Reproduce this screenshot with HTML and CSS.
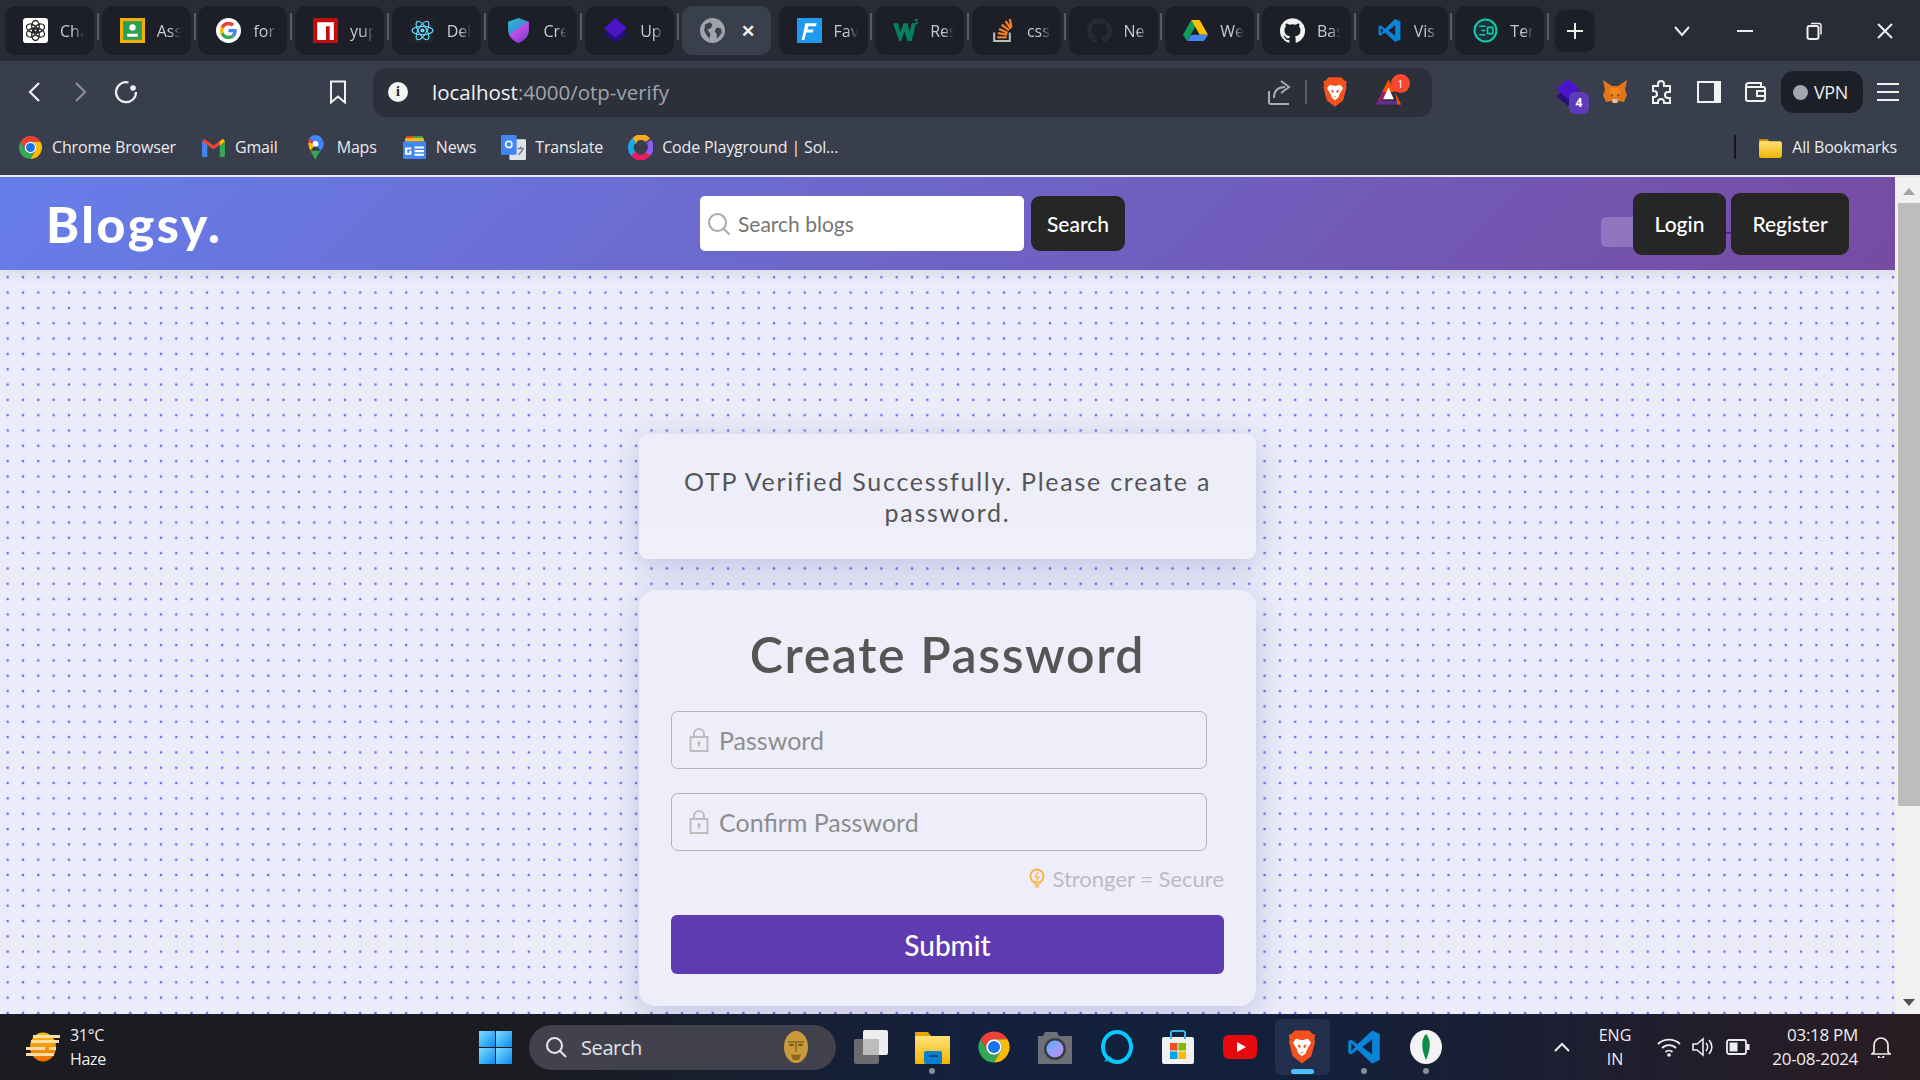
FILE: index.html
```html
<!DOCTYPE html>
<html lang="en">
<head>
<meta charset="utf-8">
<title>Blogsy</title>
<link rel="stylesheet" href="styles.css">
</head>
<body>
<svg class="sprite" aria-hidden="true">
  <defs>
    <linearGradient id="shieldG" x1="0" y1="0" x2="0.6" y2="1"><stop offset="0" stop-color="#1fc8c0"/><stop offset=".5" stop-color="#3f8fe0"/><stop offset=".55" stop-color="#c04fe0"/><stop offset="1" stop-color="#8b3fd8"/></linearGradient>
    <linearGradient id="sunG" x1="0" y1="0" x2="0" y2="1"><stop offset="0" stop-color="#ffc400"/><stop offset="1" stop-color="#f26a00"/></linearGradient>
    <linearGradient id="winG" x1="0" y1="0" x2="1" y2="1"><stop offset="0" stop-color="#7fdcff"/><stop offset="1" stop-color="#0a8cf0"/></linearGradient>
    <linearGradient id="fldG" x1="0" y1="0" x2="0" y2="1"><stop offset="0" stop-color="#ffe27a"/><stop offset="1" stop-color="#f2b500"/></linearGradient>
    <linearGradient id="camG" x1="0" y1="0" x2="1" y2="1"><stop offset="0" stop-color="#5ab0ff"/><stop offset="1" stop-color="#c98cf0"/></linearGradient>
  </defs>
  <symbol id="chrome" viewBox="0 0 24 24">
    <path fill="#EA4335" d="M2.47 6.5A11 11 0 0 1 21.53 6.5H12A5.5 5.5 0 0 0 7.24 14.75Z"/>
    <path fill="#34A853" d="M2.47 6.5A11 11 0 0 0 12 23L16.76 14.75A5.5 5.5 0 0 1 7.24 14.75Z"/>
    <path fill="#FBBC05" d="M21.53 6.5A11 11 0 0 1 12 23L16.76 14.75A5.5 5.5 0 0 0 12 6.5Z"/>
    <circle cx="12" cy="12" r="5.5" fill="#fff"/><circle cx="12" cy="12" r="4.3" fill="#1a73e8"/>
  </symbol>
  <symbol id="google" viewBox="0 0 48 48">
    <path fill="#EA4335" d="M24 9.5c3.54 0 6.71 1.22 9.21 3.6l6.85-6.85C35.9 2.38 30.47 0 24 0 14.62 0 6.51 5.38 2.56 13.22l7.98 6.19C12.43 13.72 17.74 9.5 24 9.5z"/>
    <path fill="#4285F4" d="M46.98 24.55c0-1.57-.15-3.09-.38-4.55H24v9.02h12.94c-.58 2.96-2.26 5.48-4.78 7.18l7.73 6c4.51-4.18 7.09-10.36 7.09-17.65z"/>
    <path fill="#FBBC05" d="M10.53 28.59c-.48-1.45-.76-2.99-.76-4.59s.27-3.14.76-4.59l-7.98-6.19C.92 16.46 0 20.12 0 24c0 3.88.92 7.54 2.56 10.78l7.97-6.19z"/>
    <path fill="#34A853" d="M24 48c6.48 0 11.93-2.13 15.89-5.81l-7.73-6c-2.15 1.45-4.92 2.3-8.16 2.3-6.26 0-11.57-4.22-13.47-9.91l-7.98 6.19C6.51 42.62 14.62 48 24 48z"/>
  </symbol>
  <symbol id="brave" viewBox="0 0 24 24">
    <path fill="#f4511e" d="M7.2 1h9.6l2.2 2.4 1.8.5-.6 3.2.5 1.4-2.5 9.7L12 23l-6.2-4.8-2.5-9.7.5-1.4-.6-3.2 1.8-.5z"/>
    <path fill="#fff" d="M8 6.5l4 1 4-1 2 2.6-2.6 4.4-.9 2.6-2.5 2-2.5-2-.9-2.6L6 9.1z"/>
    <path fill="#f4511e" d="M9 10.2l2 .8v1.2l-1 .6zM15 10.2l-2 .8v1.2l1 .6zM10.8 15l1.2.5 1.2-.5-1.2 1.4z"/>
  </symbol>
  <symbol id="vscode" viewBox="0 0 24 24">
    <path fill-rule="evenodd" fill="#0a84d8" d="M17.4 1 22.5 3.4v17.2L17.4 23 7.6 13.8 3.4 17 1.5 16V8l1.9-1L7.6 10.2zM17.4 7 11 12l6.4 5zM3.6 9.4v5.2L6.2 12z"/>
  </symbol>
  <symbol id="github" viewBox="0 0 24 24">
    <path d="M12 .3a12 12 0 0 0-3.8 23.4c.6.1.8-.3.8-.6v-2c-3.3.7-4-1.6-4-1.6-.6-1.4-1.4-1.8-1.4-1.8-1-.7.1-.7.1-.7 1.2.1 1.8 1.2 1.8 1.2 1 1.8 2.8 1.3 3.5 1 .1-.8.4-1.3.8-1.6-2.7-.3-5.5-1.3-5.5-6 0-1.2.5-2.3 1.3-3.1-.2-.4-.6-1.6 0-3.2 0 0 1-.3 3.4 1.2a11.5 11.5 0 0 1 6 0c2.3-1.5 3.3-1.2 3.3-1.2.6 1.6.2 2.8 0 3.2.9.8 1.3 1.9 1.3 3.2 0 4.6-2.8 5.6-5.5 5.9.5.4.9 1 .9 2.2v3.3c0 .3.1.7.8.6A12 12 0 0 0 12 .3"/>
  </symbol>
  <symbol id="lock" viewBox="0 0 20 24">
    <g fill="none" stroke="#bdbdbd" stroke-width="2"><rect x="1.5" y="9" width="17" height="14"/><path d="M5 9V6a5 5 0 0 1 10 0v3"/></g>
    <circle cx="10" cy="15" r="1.8" fill="#bdbdbd"/><rect x="9.2" y="15" width="1.6" height="4" fill="#bdbdbd"/>
  </symbol>
</svg>

<div class="tabstrip">
  <div class="tab"><svg class="tab-ic" viewBox="0 0 24 24"><rect width="24" height="24" rx="3" fill="#fff"/><g fill="none" stroke="#222" stroke-width="1.3"><ellipse cx="12" cy="8" rx="3.6" ry="5.6"/><ellipse cx="12" cy="8" rx="3.6" ry="5.6" transform="rotate(60 12 12)"/><ellipse cx="12" cy="8" rx="3.6" ry="5.6" transform="rotate(120 12 12)"/><ellipse cx="12" cy="8" rx="3.6" ry="5.6" transform="rotate(180 12 12)"/><ellipse cx="12" cy="8" rx="3.6" ry="5.6" transform="rotate(240 12 12)"/><ellipse cx="12" cy="8" rx="3.6" ry="5.6" transform="rotate(300 12 12)"/></g></svg><span class="tab-t">Cha</span></div><i class="sep"></i>
  <div class="tab"><svg class="tab-ic" viewBox="0 0 24 24"><rect width="24" height="24" fill="#f2b100"/><rect x="3" y="3" width="18" height="18" fill="#2f9e55"/><circle cx="12" cy="9" r="3" fill="#fff"/><path fill="#fff" d="M7 15h10v3H7z"/></svg><span class="tab-t">Ass</span></div><i class="sep"></i>
  <div class="tab"><svg class="tab-ic" viewBox="0 0 26 26"><circle cx="13" cy="13" r="13" fill="#fff"/><use href="#google" x="4" y="4" width="18" height="18"/></svg><span class="tab-t">for</span></div><i class="sep"></i>
  <div class="tab"><svg class="tab-ic" viewBox="0 0 24 24"><rect width="24" height="24" fill="#c40c0c"/><path fill="#fff" d="M4 4h16v17h-4V8h-3.5v13H4z"/></svg><span class="tab-t">yup</span></div><i class="sep"></i>
  <div class="tab"><svg class="tab-ic" viewBox="0 0 24 24"><rect width="24" height="24" fill="#20232a"/><g fill="none" stroke="#61dafb" stroke-width="1.1"><ellipse cx="12" cy="12" rx="10" ry="4"/><ellipse cx="12" cy="12" rx="10" ry="4" transform="rotate(60 12 12)"/><ellipse cx="12" cy="12" rx="10" ry="4" transform="rotate(120 12 12)"/></g><circle cx="12" cy="12" r="2" fill="#61dafb"/></svg><span class="tab-t">Del</span></div><i class="sep"></i>
  <div class="tab"><svg class="tab-ic" viewBox="0 0 24 24"><path fill="url(#shieldG)" d="M12 0l10 3.5v8C22 18 17 22 12 24 7 22 2 18 2 11.5v-8z"/></svg><span class="tab-t">Cre</span></div><i class="sep"></i>
  <div class="tab"><svg class="tab-ic" viewBox="0 0 24 24"><path fill="#2a0e80" d="M12 7l11 8-11 9L1 15z"/><path fill="#4a14c8" d="M12 0l11 10-11 9L1 10z"/></svg><span class="tab-t">Up</span></div><i class="sep"></i>
  <div class="tab tab-active"><svg class="tab-ic" viewBox="0 0 24 24"><circle cx="12" cy="12" r="12" fill="#9fa3ac"/><path fill="#3a3f4c" d="M5 6l5-2 2 3-2 3-3 1 3 4-1 5-3-4-2-4zM16 9l4 1 1 4-3 4-2 2v-5l-2-2z"/></svg><span class="tab-x">✕</span></div><i class="sep sep-off"></i>
  <div class="tab"><svg class="tab-ic" viewBox="0 0 24 24"><rect width="24" height="24" fill="#1e9bf0"/><path fill="#fff" d="M8 5h11l-1 3h-7l-1 3h6l-1 3h-6l-2 7H4.500z"/></svg><span class="tab-t">Fav</span></div><i class="sep"></i>
  <div class="tab"><svg class="tab-ic" viewBox="0 0 24 24"><path fill="#04825f" d="M0 5h5l2 9 3-9h4l2 9 2-9h4l-4 17h-4l-3-9-3 9H6z"/><path fill="#04825f" d="M21 1h3v1l-1 1 1 1v2h-3V5h2l-1-1 1-1h-2z"/></svg><span class="tab-t">Res</span></div><i class="sep"></i>
  <div class="tab"><svg class="tab-ic" viewBox="0 0 24 24"><path fill="none" stroke="#bcbbbb" stroke-width="2" d="M4 14v8h15v-8"/><g fill="none" stroke="#f48024" stroke-width="2.200"><path d="M7 18.500h9M7.500 14.500l9 1.500M8.700 10.500l8.200 3.600M11.200 6.500l7 5.200M15 3l5 7.300M19 1l1.600 8"/></g></svg><span class="tab-t">css</span></div><i class="sep"></i>
  <div class="tab"><svg class="tab-ic icon-ghdark"><use href="#github"/></svg><span class="tab-t">Ne</span></div><i class="sep"></i>
  <div class="tab"><svg class="tab-ic" viewBox="0 0 24 24"><path fill="#0f9d58" d="M8 2 0 16l4 6 8-14z"/><path fill="#ffc107" d="M8 2h8l8 14h-8z"/><path fill="#4285f4" d="M4 22h16l4-6H8z"/></svg><span class="tab-t">We</span></div><i class="sep"></i>
  <div class="tab"><svg class="tab-ic icon-ghwhite"><use href="#github"/></svg><span class="tab-t">Bas</span></div><i class="sep"></i>
  <div class="tab"><svg class="tab-ic"><use href="#vscode"/></svg><span class="tab-t">Vis</span></div><i class="sep"></i>
  <div class="tab"><svg class="tab-ic" viewBox="0 0 24 24"><circle cx="12" cy="12" r="10.500" fill="#17323a" stroke="#16c8a8" stroke-width="2"/><g stroke="#16c8a8" stroke-width="1.500" fill="none"><path d="M6 8h6M8 12h4M6 16h6"/><path d="M14 9h5v6h-5z"/></g></svg><span class="tab-t">Ter</span></div><i class="sep"></i>
  <div class="tab-plus"><svg width="20" height="20" viewBox="0 0 20 20"><path stroke="#eee" stroke-width="2" d="M10 2v16M2 10h16"/></svg></div>
  <div class="win">
    <svg class="win-a" width="18" height="12" viewBox="0 0 18 12"><path d="M2 2l7 8 7-8" fill="none" stroke="#eee" stroke-width="2"/></svg>
    <svg class="win-b" width="18" height="4" viewBox="0 0 18 4"><path d="M1 2h16" stroke="#eee" stroke-width="2"/></svg>
    <svg class="win-c" width="16" height="18" viewBox="0 0 16 18"><rect x="1.500" y="4" width="11" height="13" rx="2" fill="none" stroke="#eee" stroke-width="2"/><path d="M5 1.500h8a2 2 0 0 1 2 2v9" fill="none" stroke="#eee" stroke-width="1.500"/></svg>
    <svg class="win-d" width="18" height="18" viewBox="0 0 18 18"><path d="M2 2l14 14M16 2L2 16" stroke="#eee" stroke-width="2"/></svg>
  </div>
</div>

<div class="toolbar">
  <svg class="nav-back" width="16" height="24" viewBox="0 0 16 24"><path d="M13 3L4 12l9 9" fill="none" stroke="#f0f0f0" stroke-width="2.200"/></svg>
  <svg class="nav-fwd" width="16" height="24" viewBox="0 0 16 24"><path d="M3 3l9 9-9 9" fill="none" stroke="#8a8e98" stroke-width="2.200"/></svg>
  <svg class="nav-rel" width="26" height="26" viewBox="0 0 26 26"><path d="M15.500 3.500A10 10 0 1 0 23 13" fill="none" stroke="#f0f0f0" stroke-width="2.200"/><circle cx="20" cy="9" r="2.800" fill="#f0f0f0"/></svg>
  <svg class="nav-mark" width="18" height="24" viewBox="0 0 18 24"><path d="M2 1.500h14v21l-7-6-7 6z" fill="none" stroke="#f0f0f0" stroke-width="2"/></svg>
  <div class="urlbar">
    <span class="info">i</span>
    <span class="url"><b>localhost</b>:4000/otp-verify</span>
    <svg class="url-share" width="26" height="28" viewBox="0 0 26 28"><path d="M2 13v11a2 2 0 0 0 2 2h18" fill="none" stroke="#a8abb2" stroke-width="2"/><path d="M7 20c0-7 4-11 11-11M14 3l8 6-8 6" fill="none" stroke="#a8abb2" stroke-width="2"/></svg>
    <i class="url-sep"></i>
    <svg class="url-brave"><use href="#brave"/></svg>
    <div class="bat">
      <svg width="27" height="26" viewBox="0 0 30 28"><path fill="#ff5000" d="M15 0l7 14H8z"/><path fill="#9e1f63" d="M8 14l7 0-11 14H1z"/><path fill="#662d91" d="M4 24h22l3 4H1z"/><path fill="#ff5000" d="M22 14l7 14h-4z"/><path fill="#fff" d="M15 9l6 13H9z"/></svg>
      <span class="bat-badge">1</span>
    </div>
  </div>
  <div class="exts">
    <div class="ext-purple">
      <svg width="24" height="30" viewBox="0 0 24 30"><path fill="#2a0e80" d="M12 10l12 9-12 10L0 19z"/><path fill="#4a14c8" d="M12 2l12 10-12 10L0 12z"/></svg>
      <span class="ext-badge">4</span>
    </div>
    <svg class="ext-fox" width="26" height="26" viewBox="0 0 26 26"><path fill="#e2761b" d="M1 1l9 6h6l9-6-2 10 2 5-3 7-5-1-2 2h-4l-2-2-5 1-3-7 2-5z"/><path fill="#f6851b" d="M7 12l3-3h6l3 3-3 6h-6z"/><path fill="#233447" d="M9 15l2 1-1 2zM17 15l-2 1 1 2z"/><path fill="#d7c1b3" d="M10 20h6l-1 4h-4z"/></svg>
    <svg class="ext-puz" width="24" height="26" viewBox="0 0 24 26"><path fill="none" stroke="#f2f2f2" stroke-width="2" d="M3 7h5V5a3 3 0 0 1 6 0v2h6v6h-2a3 3 0 0 0 0 6h2v5h-6v-1a3 3 0 0 0-6 0v1H3v-6h1a3 3 0 0 0 0-6H3z"/></svg>
    <svg class="ext-side" width="24" height="22" viewBox="0 0 24 22"><rect x="1" y="1" width="22" height="20" fill="none" stroke="#f2f2f2" stroke-width="2"/><rect x="1" y="1" width="6" height="20" fill="#f2f2f2"/></svg>
    <svg class="ext-wal" width="24" height="22" viewBox="0 0 24 22"><path fill="none" stroke="#f2f2f2" stroke-width="2" d="M3 5a3 3 0 0 1 3-3h12v4M3 5v13a2 2 0 0 0 2 2h15a2 2 0 0 0 2-2V8a2 2 0 0 0-2-2H4"/><rect x="14" y="10" width="8" height="5" fill="none" stroke="#f2f2f2" stroke-width="2"/></svg>
    <div class="vpn"><i class="vpn-dot"></i>VPN</div>
    <div class="burger"><i></i><i></i><i></i></div>
  </div>
</div>

<div class="bookmarks">
  <span class="bm bm-chrome"><svg class="bm-ic"><use href="#chrome"/></svg>Chrome Browser</span>
  <span class="bm"><svg class="bm-ic" viewBox="0 0 24 24"><path fill="#4285f4" d="M1 6h5v15H2a1 1 0 0 1-1-1z"/><path fill="#34a853" d="M18 6h5v14a1 1 0 0 1-1 1h-4z"/><path fill="#ea4335" d="M1 6l2-2.500L12 10l9-6.500L23 6l-11 8z"/><path fill="#fbbc04" d="M18 6l3-2.500L23 6l-5 4z"/></svg>Gmail</span>
  <span class="bm"><svg class="bm-ic" viewBox="0 0 24 24"><path fill="#34a853" d="M7 15l5 9c1-4 3-6 5-9z"/><path fill="#fbbc04" d="M5 7c0 3 1 5 2 8l5-6z"/><path fill="#ea4335" d="M6 3a8 8 0 0 0-1 4l7 2z"/><path fill="#4285f4" d="M12 0a8 8 0 0 0-6 3l6 6 7-4a8 8 0 0 0-7-5z"/><path fill="#4285f4" d="M19 5a8 8 0 0 1-2 10l-5-6z"/><circle cx="12" cy="8.500" r="2.800" fill="#fff"/></svg>Maps</span>
  <span class="bm"><svg class="bm-ic" viewBox="0 0 24 24"><path fill="#ea4335" d="M4 1l9 0 0 6H4z"/><path fill="#34a853" d="M11 1l9 0v6h-9z"/><path fill="#fbbc04" d="M3 3h18v6H3z"/><rect x="1" y="6" width="22" height="17" rx="1" fill="#4285f4"/><g fill="#fff"><path d="M3 12h6v2H3zM3 12h2v7H3zM3 17h6v2H3zM7 15h2v3H7z"/><path d="M12 11h9v2h-9zM12 14.500h9v2h-9zM12 18h9v2h-9z"/></g></svg>News</span>
  <span class="bm"><svg class="bm-ic" viewBox="0 0 24 24"><rect x="8" y="4" width="16" height="20" rx="1" fill="#dfe3e8"/><rect x="0" y="0" width="15" height="19" rx="1" fill="#4285f4"/><circle cx="7.500" cy="9" r="3" fill="none" stroke="#fff" stroke-width="1.500"/><path d="M16 13h6M19 11v2M17 19l4-5" stroke="#777" stroke-width="1.300" fill="none"/></svg>Translate</span>
  <span class="bm"><svg class="bm-ic" viewBox="0 0 24 24"><g fill="none" stroke-width="5.500"><path stroke="#f7a81b" d="M5 8a8 8 0 0 1 14-3"/><path stroke="#8b5cf6" d="M20 6a9 9 0 0 1-2 13"/><path stroke="#ee1b5e" d="M19 18a8 8 0 0 1-14-1"/><path stroke="#1aa7ec" d="M5 18a9 9 0 0 1 1-13"/></g></svg>Code Playground | Sol...</span>
  <i class="bm-sep"></i>
  <span class="bm bm-all"><svg class="bm-ic" viewBox="0 0 24 24"><path fill="#d9a000" d="M1 4h8l2 2v6H1z"/><rect x="1" y="6" width="22" height="16" rx="2" fill="url(#fldG)"/></svg>All Bookmarks</span>
</div>

<div class="viewport">
  <div class="page">
    <header class="site-head">
      <div class="logo">Blogsy.</div>
      <form class="search">
        <label class="search-box">
          <svg width="24" height="24" viewBox="0 0 24 24"><circle cx="10.500" cy="10.500" r="8.500" fill="none" stroke="#aaa" stroke-width="2"/><path d="M16.500 16.500l6 6" stroke="#aaa" stroke-width="2"/></svg>
          <input class="search-in" type="text" placeholder="Search blogs">
        </label>
        <button class="dark-btn search-btn" type="button">Search</button>
      </form>
      <nav class="site-nav">
        <i class="ghost"></i>
        <a class="dark-btn login">Login</a>
        <i class="joint"></i>
        <a class="dark-btn register">Register</a>
      </nav>
    </header>
    <main class="main">
      <section class="card note">OTP Verified Successfully. Please create a password.</section>
      <section class="card form-card">
        <h1 class="title">Create Password</h1>
        <label class="field"><svg class="lock"><use href="#lock"/></svg><input class="field-in" type="password" placeholder="Password"></label>
        <label class="field field-2"><svg class="lock"><use href="#lock"/></svg><input class="field-in" type="password" placeholder="Confirm Password"></label>
        <div class="hint"><svg width="16" height="20" viewBox="0 0 16 20"><path d="M5 14.500C3 13 1.500 11 1.500 8a6.500 6.500 0 0 1 13 0c0 3-1.500 5-3.500 6.500z" fill="none" stroke="#f7b440" stroke-width="1.800"/><path d="M5.500 17h5M6.500 19h3" stroke="#f7b440" stroke-width="1.600"/><path d="M9 4L6 9h4l-3 4" fill="none" stroke="#f7b440" stroke-width="1.200"/></svg><span>Stronger = Secure</span></div>
        <button class="submit" type="button">Submit</button>
      </section>
    </main>
  </div>
  <div class="scrollbar">
    <span class="sb-up"></span>
    <span class="sb-thumb"></span>
    <span class="sb-down"></span>
  </div>
</div>

<footer class="taskbar">
  <div class="weather">
    <svg width="36" height="30" viewBox="0 0 36 30"><ellipse cx="18" cy="15" rx="13" ry="14.500" fill="url(#sunG)"/><g fill="#f6dfa8"><rect x="8" y="3" width="27" height="3"/><rect x="6" y="8" width="28" height="3"/><rect x="1" y="15" width="19" height="3"/><rect x="24" y="15" width="7" height="3"/><rect x="1" y="21" width="28" height="3"/></g></svg>
    <div class="weather-t"><span>31°C</span><span>Haze</span></div>
  </div>
  <div class="task-center">
    <svg class="t-win" width="33" height="33" viewBox="0 0 33 33"><g fill="url(#winG)"><rect width="16" height="16"/><rect x="17" width="16" height="16"/><rect y="17" width="16" height="16"/><rect x="17" y="17" width="16" height="16"/></g></svg>
    <div class="t-search">
      <svg width="22" height="22" viewBox="0 0 22 22"><circle cx="9.500" cy="9.500" r="7.500" fill="none" stroke="#e8e8e8" stroke-width="2"/><path d="M15 15l6 6" stroke="#e8e8e8" stroke-width="2"/></svg>
      <span class="t-search-t">Search</span>
      <svg class="t-head" width="34" height="34" viewBox="0 0 34 34"><ellipse cx="17" cy="17" rx="12" ry="16" fill="#c89a3c"/><path d="M9 12h16M17 12v10" stroke="#8a6520" stroke-width="1.500"/><ellipse cx="12.500" cy="15" rx="2.500" ry="1.300" fill="#7c5a1a"/><ellipse cx="21.500" cy="15" rx="2.500" ry="1.300" fill="#7c5a1a"/><path d="M12 24q5 2 10 0l-2 6h-6z" fill="#8a6520"/></svg>
    </div>
    <div class="t-app t-task"><svg width="34" height="34" viewBox="0 0 34 34"><rect x="0" y="9" width="25" height="25" rx="2" fill="#6b6b6f"/><rect x="9" y="0" width="25" height="25" rx="2" fill="#eeeeee"/><rect x="9" y="9" width="16" height="16" fill="#bdbdc0"/></svg></div>
    <div class="t-app t-on"><svg width="35" height="34" viewBox="0 0 35 34"><path fill="#e8a500" d="M0 2h13l3 4h19v26H0z"/><rect y="6" width="35" height="28" rx="1" fill="url(#fldG)"/><rect x="9" y="21" width="18" height="13" rx="2" fill="#0a7fd0"/><path d="M14 26h9" stroke="#044a80" stroke-width="2"/></svg></div>
    <div class="t-app"><svg width="34" height="34"><use href="#chrome"/></svg></div>
    <div class="t-app"><svg width="34" height="34" viewBox="0 0 34 34"><path fill="#6d7078" d="M0 6h5l2-4h12l2 4h13v28H0z"/><circle cx="17" cy="19" r="11" fill="#3a3c42"/><circle cx="17" cy="19" r="8.500" fill="url(#camG)"/></svg></div>
    <div class="t-app"><svg width="34" height="34" viewBox="0 0 34 34"><ellipse cx="17" cy="17" rx="14" ry="15" fill="none" stroke="#00caff" stroke-width="4"/><path d="M4 32l5-6 4 3z" fill="#00caff"/></svg></div>
    <div class="t-app"><svg width="34" height="34" viewBox="0 0 34 34"><rect x="1" y="7" width="32" height="27" rx="2" fill="#f1f1f1"/><path d="M10 9V3a2 2 0 0 1 2-2h10a2 2 0 0 1 2 2v6" fill="none" stroke="#38b4e8" stroke-width="2"/><rect x="9" y="13" width="7.500" height="7.500" fill="#f25022"/><rect x="17.500" y="13" width="7.500" height="7.500" fill="#7fba00"/><rect x="9" y="21.500" width="7.500" height="7.500" fill="#00a4ef"/><rect x="17.500" y="21.500" width="7.500" height="7.500" fill="#ffb900"/></svg></div>
    <div class="t-app"><svg width="34" height="34" viewBox="0 0 34 34"><rect x="0" y="5" width="34" height="24" rx="6" fill="#e8090f"/><path fill="#fff" d="M14 12l9 5-9 5z"/></svg></div>
    <div class="t-app t-active"><svg width="36" height="36"><use href="#brave"/></svg></div>
    <div class="t-app t-on"><svg width="36" height="36"><use href="#vscode"/></svg></div>
    <div class="t-app t-on"><svg width="34" height="34" viewBox="0 0 34 34"><ellipse cx="17" cy="17" rx="16" ry="17" fill="#f3f3f3"/><path fill="#0e8a4a" d="M17 4c5 5 5 15 0 26-5-11-5-21 0-26z"/></svg></div>
  </div>
  <div class="tray">
    <svg class="tr-up" width="18" height="11" viewBox="0 0 18 11"><path d="M2 9l7-7 7 7" fill="none" stroke="#eee" stroke-width="2"/></svg>
    <div class="tr-lang"><span>ENG</span><span>IN</span></div>
    <svg class="tr-wifi" width="24" height="20" viewBox="0 0 24 20"><g fill="none" stroke="#eee" stroke-width="1.800"><path d="M1 7a16 16 0 0 1 22 0M5 11a10 10 0 0 1 14 0M8.500 15a5 5 0 0 1 7 0"/></g><circle cx="12" cy="18" r="1.800" fill="#eee"/></svg>
    <svg class="tr-vol" width="24" height="20" viewBox="0 0 24 20"><path d="M1 7h4l6-5v16l-6-5H1z" fill="none" stroke="#eee" stroke-width="1.600"/><path d="M14 6a6 6 0 0 1 0 8M17 3a10 10 0 0 1 0 14" fill="none" stroke="#eee" stroke-width="1.600"/></svg>
    <svg class="tr-bat" width="24" height="16" viewBox="0 0 24 16"><rect x="1" y="1" width="19" height="14" rx="2" fill="none" stroke="#eee" stroke-width="1.800"/><rect x="3.500" y="3.500" width="8" height="9" fill="#eee"/><rect x="21" y="5" width="2.500" height="6" fill="#eee"/></svg>
    <div class="tr-time"><span>03:18 PM</span><span>20-08-2024</span></div>
    <svg class="tr-bell" width="20" height="22" viewBox="0 0 20 22"><path d="M3 16V9a7 7 0 0 1 14 0v7l2 2H1z" fill="none" stroke="#eee" stroke-width="1.700"/><path d="M7.500 20a2.500 2.500 0 0 0 5 0" fill="none" stroke="#eee" stroke-width="1.700"/></svg>
  </div>
</footer>
</body>
</html>
```

FILE: styles.css
```css
* { box-sizing: border-box; }
html, body { margin: 0; height: 100%; overflow: hidden; }
body { width: 1920px; height: 1080px; display: flex; flex-direction: column; font-family: "Open Sans", "Noto Sans", sans-serif; background: #282b35; }
.sprite { position: absolute; width: 0; height: 0; }
i { font-style: normal; display: block; }

/* tab strip */
.tabstrip { height: 61px; flex: none; background: #292c37; display: flex; align-items: flex-start; padding: 6px 0 0 5px; }
.tab { width: 89px; height: 49px; flex: none; border-radius: 11px; background: #1c1f27; display: flex; align-items: center; padding-left: 18px; gap: 12px; overflow: hidden; }
.tab-active { background: #3a3f4c; }
.tab-ic { width: 25px; height: 25px; flex: none; }
.tab-t { width: 24px; flex: none; white-space: nowrap; color: #c9cbd0; font-size: 16px; -webkit-mask-image: linear-gradient(90deg, #000 55%, transparent 100%); mask-image: linear-gradient(90deg, #000 55%, transparent 100%); }
.tab-x { color: #f2f2f2; font-size: 17px; margin-left: 4px; font-weight: 700; }
.sep { width: 2px; height: 27px; margin: 7px 2.85px 0; background: #565b68; flex: none; }
.sep-off { background: transparent; }
.tab-plus { width: 40px; height: 42px; margin: 4px 0 0 3px; background: #1c1f27; border-radius: 10px; display: flex; align-items: center; justify-content: center; flex: none; }
.win { display: flex; align-items: center; height: 50px; margin-left: 78px; flex: none; }
.win-b { margin-left: 45px; }
.win-c { margin-left: 52px; }
.win-d { margin-left: 54px; }

/* toolbar */
.toolbar { height: 60px; flex: none; background: #393e4c; display: flex; align-items: center; padding: 2px 0 0 26px; }
.nav-fwd { margin-left: 31px; }
.nav-rel { margin-left: 24px; }
.nav-mark { margin-left: 190px; }
.urlbar { width: 1059px; height: 49px; margin-left: 26px; background: #2c303b; border-radius: 13px; display: flex; align-items: center; padding: 0 30px 0 15px; flex: none; }
.info { width: 20px; height: 20px; border-radius: 50%; background: #f5f5f5; color: #222; font: 700 14px/20px "Liberation Serif", serif; text-align: center; flex: none; }
.url { flex: 1; margin-left: 24px; color: #a1a4ab; font-size: 20.5px; white-space: nowrap; }
.url b { color: #f2f2f2; font-weight: 400; }
.url-share { flex: none; }
.url-sep { width: 2px; height: 24px; background: #5a5f6a; margin-left: 12px; flex: none; }
.url-brave { width: 32px; height: 32px; margin-left: 12px; flex: none; }
.bat { position: relative; margin-left: 24px; width: 27px; height: 26px; flex: none; }
.bat-badge { position: absolute; left: 16px; top: -5px; width: 19px; height: 19px; border-radius: 50%; background: #f8492f; color: #fff; font-size: 11px; line-height: 19px; text-align: center; }
.exts { display: flex; align-items: center; margin-left: 124px; }
.ext-purple { position: relative; width: 24px; height: 30px; }
.ext-badge { position: absolute; left: 13px; top: 15px; width: 20px; height: 22px; border-radius: 6px; background: #5e3bb8; color: #fff; font-size: 12px; font-weight: 700; line-height: 22px; text-align: center; }
.ext-fox { margin-left: 22px; }
.ext-puz { margin-left: 22px; }
.ext-side { margin-left: 23px; transform: scaleX(-1); }
.ext-wal { margin-left: 22px; }
.vpn { width: 82px; height: 42px; margin-left: 14px; border-radius: 13px; background: #1c1f27; color: #eee; font-size: 18px; display: flex; align-items: center; gap: 6px; padding-left: 12px; letter-spacing: -.4px; }
.vpn-dot { width: 15px; height: 15px; border-radius: 50%; background: #a3a6ae; }
.burger { margin-left: 14px; width: 22px; display: flex; flex-direction: column; gap: 6px; }
.burger i { height: 2px; background: #f2f2f2; }

/* bookmarks */
.bookmarks { height: 56px; flex: none; background: #393e4c; border-bottom: 2px solid #e6e7ea; display: flex; align-items: center; padding: 0 0 2px 18px; color: #ebebed; font-size: 16px; letter-spacing: -.15px; }
.bm { display: flex; align-items: center; gap: 9px; margin-right: 25px; white-space: nowrap; }
.bm-ic { width: 25px; height: 25px; flex: none; }
.bm-sep { width: 2px; height: 24px; background: #16181e; margin-left: 871px; }
.bm-all { margin-left: 22px; margin-right: 0; }

/* page */
.viewport { height: 837px; flex: none; display: flex; overflow: hidden; }
.page { width: 1895px; flex: none; height: 837px; overflow: hidden; display: flex; flex-direction: column; background-color: #ebebf9; background-image: radial-gradient(circle at center, #6e70f2 0, #6e70f2 .9px, rgba(110,112,242,0) 1.7px); background-size: 15.33px 15.33px; background-position: 0 .6px; font-family: "Lato", "Inter", sans-serif; }
.site-head { position: relative; z-index: 2; height: 93px; flex: none; background: linear-gradient(135deg, #667eea 0%, #764ba2 100%); box-shadow: 0 4px 12px rgba(0,0,0,.08); display: flex; align-items: center; padding: 0 46px; }
.logo { width: 654px; flex: none; color: #fff; font-size: 50px; font-weight: 900; letter-spacing: 2.5px; }
.search { display: flex; gap: 7px; }
.search-box { width: 324px; height: 55px; background: #fff; border-radius: 5px; display: flex; align-items: center; padding-left: 7px; gap: 5px; }
.search-in { flex: 1; min-width: 0; border: 0; outline: 0; background: transparent; font: 400 21px "Lato", sans-serif; color: #333; }
.search-in::placeholder { color: #757575; opacity: 1; }
.dark-btn { background: #262626; color: #fff; border: 0; border-radius: 9px; font: 500 21px "Lato", sans-serif; display: flex; align-items: center; justify-content: center; }
.search-btn { width: 94px; height: 55px; }
.site-nav { margin-left: auto; display: flex; align-items: center; }
.ghost { width: 32px; height: 30px; margin-top: 16px; background: rgba(255,255,255,.2); border-radius: 5px 0 0 5px; }
.login { width: 93px; height: 62px; }
.register { width: 118px; height: 62px; }
.joint { width: 5px; height: 2px; margin-top: 19px; background: #5a1fa0; }
.main { display: flex; flex-direction: column; align-items: center; padding-top: 164px; gap: 31px; color: #555; }
.card { width: 617px; background: #eeeefb; box-shadow: 0 8px 32px rgba(31,38,135,.2); }
.note { height: 125px; border-radius: 9px; padding: 32px 30px 0; text-align: center; font-size: 25px; line-height: 31px; letter-spacing: 1.75px; background: linear-gradient(#edeefa 0, #edeefa 75%, #f0f0fb 75%); }
.form-card { height: 416px; border-radius: 16px; padding: 34px 32px 0; }
.title { margin: 0 0 27px; text-align: center; font-size: 50px; line-height: 60px; font-weight: 600; color: #555; letter-spacing: 1.6px; }
.field { width: 536px; height: 58px; border: 1px solid #b3b3b8; border-radius: 7px; display: flex; align-items: center; padding-left: 17px; gap: 8px; }
.field-2 { margin-top: 24px; }
.lock { width: 20px; height: 24px; flex: none; }
.field-in { flex: 1; min-width: 0; border: 0; outline: 0; background: transparent; font: 400 25px "Lato", sans-serif; color: #333; }
.field-in::placeholder { color: #8d8d8d; opacity: 1; }
.hint { height: 28px; margin-top: 13px; display: flex; align-items: center; justify-content: flex-end; gap: 7px; color: #bcbcc0; font-size: 22px; }
.submit { display: block; width: 553px; height: 59px; margin-top: 23px; border: 0; border-radius: 6px; background: #5e3bb0; color: #fff; font: 500 28px "Lato", sans-serif; }

/* scrollbar */
.scrollbar { width: 25px; flex: none; background: #f1f1f1; padding-left: 2px; display: flex; flex-direction: column; align-items: center; }
.sb-up { margin-top: 11px; width: 0; height: 0; border: 6px solid transparent; border-top: 0; border-bottom: 7px solid #a3a3a3; }
.sb-thumb { width: 22px; height: 603px; margin-top: 8px; background: #bdbdbd; }
.sb-down { margin-top: 193px; width: 0; height: 0; border: 6px solid transparent; border-bottom: 0; border-top: 7px solid #505050; }

/* taskbar */
.taskbar { height: 66px; flex: none; background: linear-gradient(90deg, #1b1c21 0%, #1b1c22 28%, #14213d 50%, #13203c 68%, #2a1c22 100%); display: flex; align-items: center; color: #eee; }
.weather { width: 479px; flex: none; display: flex; align-items: center; padding-left: 25px; gap: 9px; }
.weather-t { display: flex; flex-direction: column; font-size: 16px; line-height: 24px; letter-spacing: -.3px; }
.task-center { display: flex; align-items: center; width: 880px; flex: none; }
.t-win { flex: none; }
.t-search { width: 307px; height: 45px; margin-left: 17px; border-radius: 23px; background: #41424e; display: flex; align-items: center; padding-left: 16px; flex: none; }
.t-search-t { margin-left: 14px; font-size: 20px; color: #e4e4e4; letter-spacing: -.4px; width: 198px; }
.t-app { position: relative; width: 61.500px; height: 56px; flex: none; display: flex; align-items: center; justify-content: center; border-radius: 6px; }
.t-task { margin-left: 4px; }
.t-on::after { content: ""; position: absolute; left: 50%; bottom: 1px; width: 6px; height: 6px; margin-left: -3px; border-radius: 50%; background: #8a8f98; }
.t-active { width: 55px; margin: 0 4px; background: #22304d; }
.t-active::after { content: ""; position: absolute; left: 16px; bottom: 1px; width: 23px; height: 5px; border-radius: 3px; background: #4dc1ff; }
.tray { display: flex; align-items: center; flex: none; }
.tr-up { margin-left: 194px; }
.tr-lang { width: 34px; margin-left: 27px; display: flex; flex-direction: column; align-items: center; font-size: 16px; line-height: 24px; }
.tr-wifi { margin-left: 25px; }
.tr-vol { margin-left: 11px; }
.tr-bat { margin-left: 10px; }
.tr-time { width: 100px; margin-left: 8px; display: flex; flex-direction: column; align-items: flex-end; font-size: 17px; line-height: 24px; letter-spacing: -.3px; }
.tr-bell { margin-left: 13px; }
.icon-ghdark { fill: #282b32; }
.icon-ghwhite { fill: #f2f2f2; }
```
